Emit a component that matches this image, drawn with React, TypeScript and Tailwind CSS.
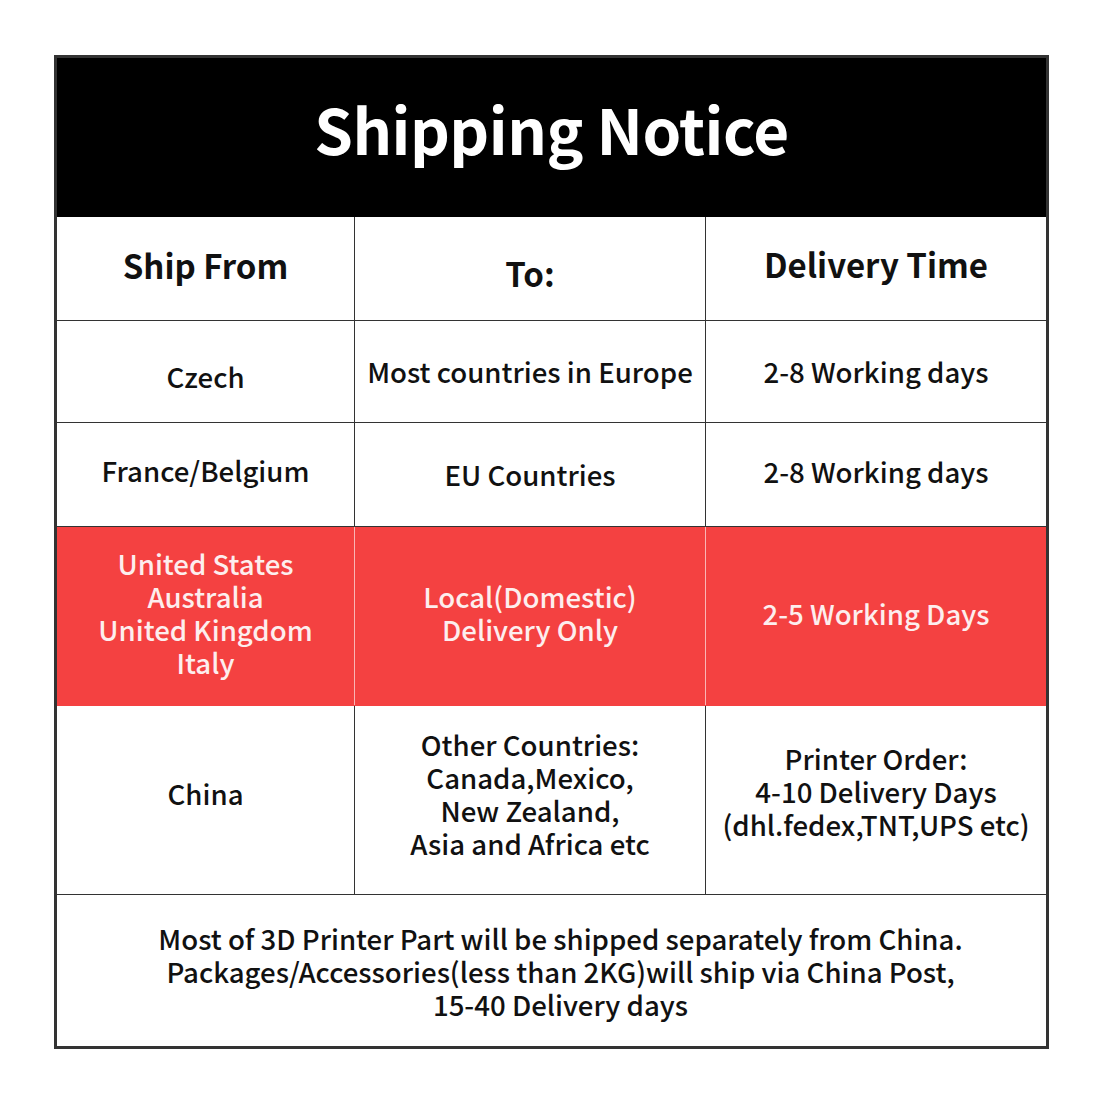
import React from 'react';

const FONT = { fontFamily: '"Noto Sans CJK SC", "Noto Sans", sans-serif' };

type Row = {
  cells: string[][];
  pad: string[]; // small nudges so text sits where the picture has it
  h: string;
  red?: boolean;
};

const ROWS: Row[] = [
  {
    cells: [['Czech'], ['Most countries in Europe'], ['2-8 Working days']],
    pad: ['pt-[10px]', '', ''],
    h: 'h-[102px]',
  },
  {
    cells: [['France/Belgium'], ['EU Countries'], ['2-8 Working days']],
    pad: ['pb-[8px]', '', 'pb-[6px]'],
    h: 'h-[104px]',
  },
  {
    cells: [
      ['United States', 'Australia', 'United Kingdom', 'Italy'],
      ['Local(Domestic)', 'Delivery Only'],
      ['2-5 Working Days'],
    ],
    pad: ['pb-[6px]', 'pb-[6px]', 'pb-[6px]'],
    h: 'h-[179px]',
    red: true,
  },
  {
    cells: [
      ['China'],
      ['Other Countries:', 'Canada,Mexico,', 'New Zealand,', 'Asia and Africa etc'],
      ['Printer Order:', '4-10 Delivery Days', '(dhl.fedex,TNT,UPS etc)'],
    ],
    pad: ['pb-[14px]', 'pb-[12px]', 'pb-[18px]'],
    h: 'h-[189px]',
  },
];

export default function App() {
  return (
    <div className="w-[1100px] h-[1100px] bg-white pt-[55px] pl-[54px]" style={FONT}>
      <div className="w-[995px] border-[3px] border-[#333] bg-white">
        <div className="h-[159px] bg-black flex items-center justify-center">
          <h1 className="text-white text-[62px] font-bold tracking-[-0.5px] leading-none pb-[20px]">Shipping Notice</h1>
        </div>

        {/* column titles */}
        <div className="grid grid-cols-[298px_351px_340px] h-[104px] border-b border-[#333] text-[#111] text-[33px] font-bold">
          <div className="flex items-center justify-center border-r border-[#333] pb-[6px]">Ship From</div>
          <div className="flex items-center justify-center border-r border-[#333] pt-[10px]">To:</div>
          <div className="flex items-center justify-center pb-[8px]">Delivery Time</div>
        </div>

        {ROWS.map((row, i) => (
          <div
            key={i}
            className={`grid grid-cols-[298px_351px_340px] ${row.h} border-b ${row.red ? 'bg-[#f44141] text-[#fdeeee] border-[#f44141]' : 'text-[#111] border-[#333]'}`}
          >
            {row.cells.map((lines, j) => (
              <div
                key={j}
                className={`flex flex-col items-center justify-center text-center text-[27.6px] font-medium leading-[33px] ${row.pad[j]} ${j < 2 ? (row.red ? 'border-r border-[#f9b5b5]' : 'border-r border-[#333]') : ''}`}
              >
                {lines.map(l => (
                  <span key={l} className="whitespace-nowrap">{l}</span>
                ))}
              </div>
            ))}
          </div>
        ))}

        <div className="h-[151px] flex flex-col items-center justify-center text-center text-[27.6px] font-medium leading-[33px] text-[#111] pt-[2px] pl-[18px]">
          <span>Most of 3D Printer Part will be shipped separately from China.</span>
          <span>Packages/Accessories(less than 2KG)will ship via China Post,</span>
          <span>15-40 Delivery days</span>
        </div>
      </div>
    </div>
  );
}
